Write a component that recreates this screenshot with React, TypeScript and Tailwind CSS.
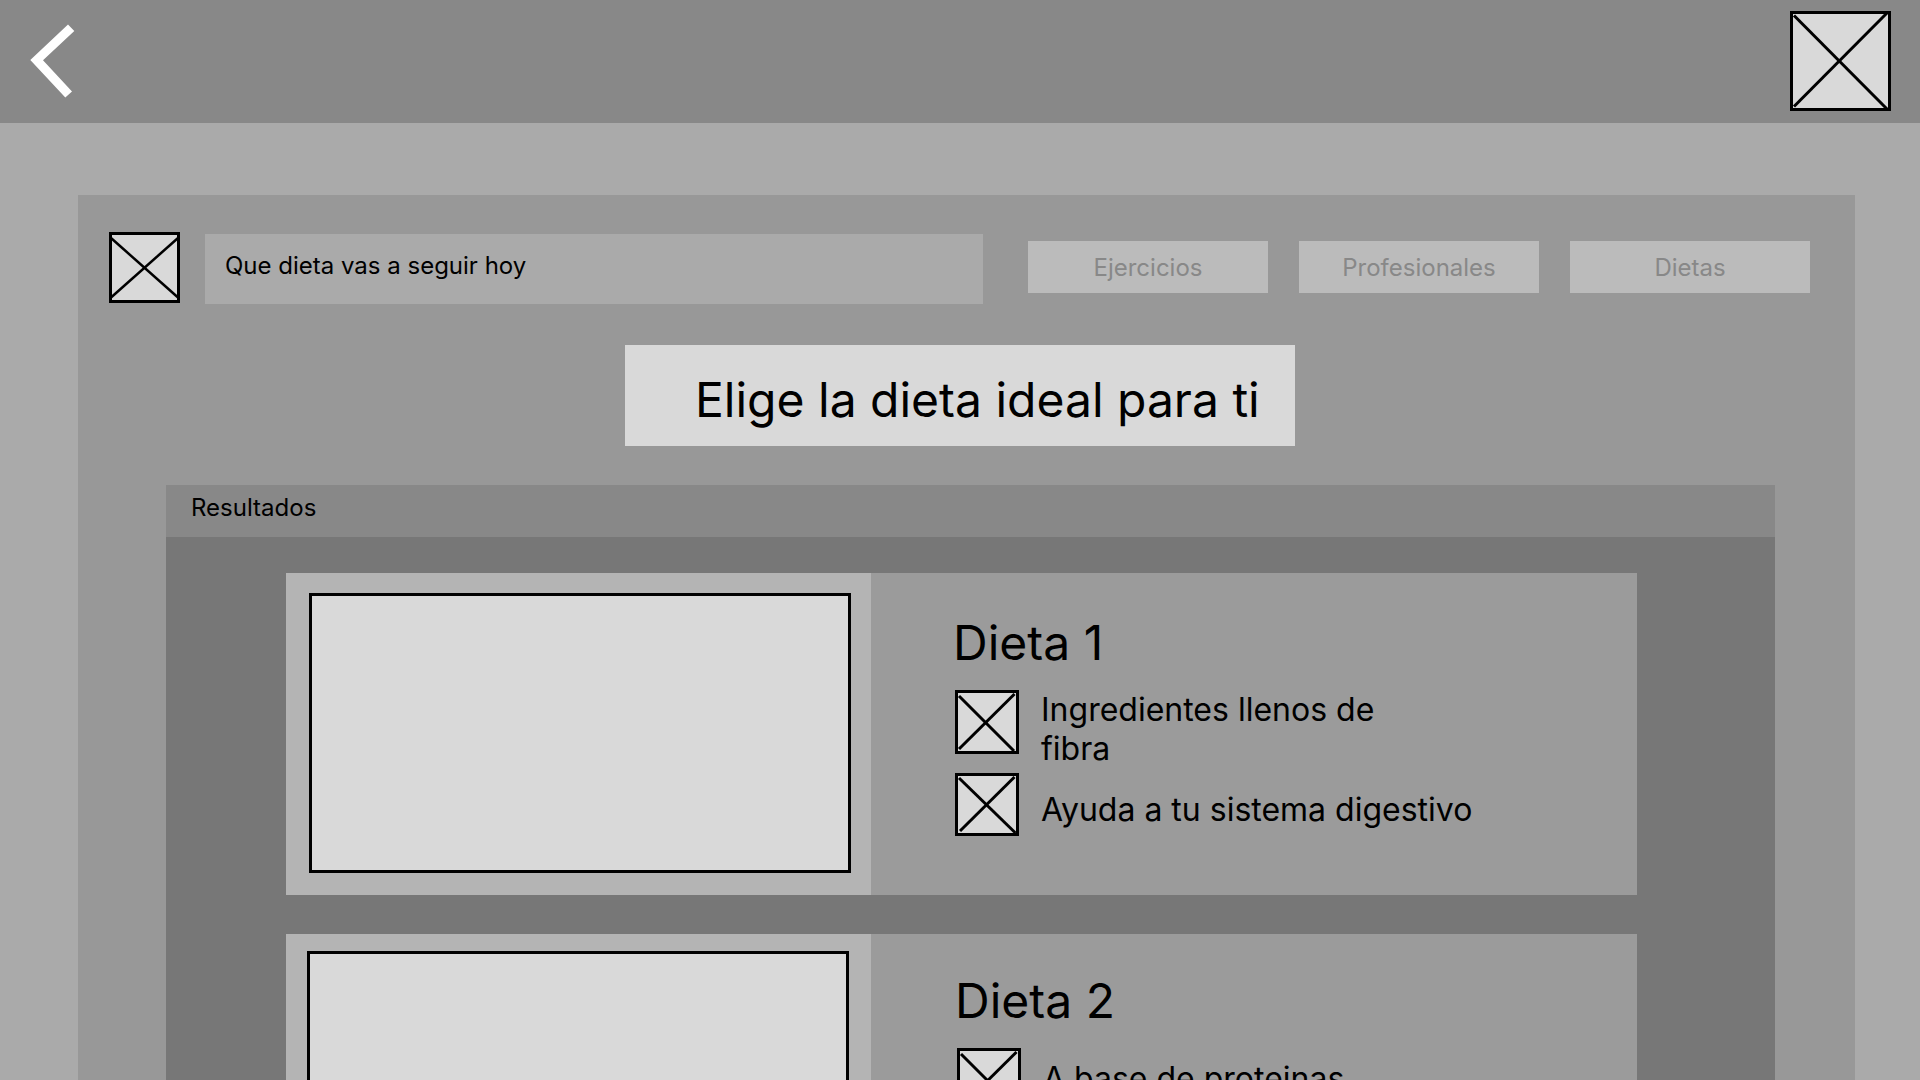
type Cross = [number, number, number, number][];

interface BoxProps {
  width: number;
  height: number;
  lines: Cross;
  stroke?: number;
}

function PlaceholderBox({ width, height, lines, stroke = 3 }: BoxProps) {
  return (
    <svg
      width={width}
      height={height}
      viewBox={`0 0 ${width} ${height}`}
      className="block shrink-0"
      aria-hidden="true"
    >
      <rect
        x={1.5}
        y={1.5}
        width={width - 3}
        height={height - 3}
        fill="#d9d9d9"
        stroke="#000"
        strokeWidth={3}
      />
      {lines.map(([x1, y1, x2, y2], i) => (
        <line
          key={i}
          x1={x1}
          y1={y1}
          x2={x2}
          y2={y2}
          stroke="#000"
          strokeWidth={stroke}
        />
      ))}
    </svg>
  );
}

const profileCross: Cross = [
  [4, 4.5, 97, 98],
  [4, 95.5, 97, 2],
];
const searchCross: Cross = [
  [2, 6, 69, 65.5],
  [2, 65.5, 69, 6],
];
const featureCross: Cross = [
  [4, 6, 59, 61],
  [4, 59, 59.5, 4],
];
const featureCrossWide: Cross = [
  [4, 5, 60.5, 60],
  [5, 58, 59.5, 4],
];

const diets = [
  {
    name: "Dieta 1",
    imagePadding: "pt-5 pr-5 pl-[23px]",
    bodyPadding: "pt-[41px] pl-[82px]",
    features: [
      { text: "Ingredientes llenos de\nfibra", pad: "", height: 64, cross: featureCross },
      { text: "Ayuda a tu sistema digestivo", pad: "pt-[17px]", height: 63, cross: featureCrossWide },
    ],
  },
  {
    name: "Dieta 2",
    imagePadding: "pt-[17px] pr-[22px] pl-[21px]",
    bodyPadding: "pt-[38px] pl-[84px]",
    features: [{ text: "A base de proteinas", pad: "pt-[11px]", height: 64, cross: featureCross }],
  },
];

const sections = ["Ejercicios", "Profesionales", "Dietas"];

export default function App() {
  return (
    <div className="h-screen overflow-y-auto bg-[#aaaaaa] font-['Inter',sans-serif] text-black [scrollbar-width:none]">
      <header className="flex h-[123px] items-center justify-between bg-[#888888] pr-[29px] pb-px pl-[30px]">
        <button type="button" aria-label="Volver">
          <svg width="46" height="76" viewBox="0 0 46 76" className="block">
            <path d="M38 1.5 44.3 8 13 37.2 42 68.5 35.3 74.5.3 37Z" fill="#fff" />
          </svg>
        </button>
        <button type="button" aria-label="Perfil">
          <PlaceholderBox width={101} height={100} lines={profileCross} />
        </button>
      </header>

      <main className="mt-[72px] mr-[65px] ml-[78px] bg-[#989898] pt-[37px] pb-10">
        <div className="flex items-start pr-[45px] pl-[31px]">
          <PlaceholderBox width={71} height={71} lines={searchCross} stroke={2.5} />
          <input
            type="text"
            aria-label="Buscar dieta"
            placeholder="Que dieta vas a seguir hoy"
            className="mt-0.5 ml-[25px] h-[70px] min-w-0 flex-1 bg-[#aaaaaa] px-5 pb-2 text-2xl outline-none placeholder:text-black placeholder:opacity-100"
          />
          <nav className="mt-[9px] ml-[45px] flex gap-[31px]">
            {sections.map((label) => (
              <button
                key={label}
                type="button"
                className="h-[52px] w-60 bg-[#bbbbbb] pt-0.5 text-2xl text-[#888888]"
              >
                {label}
              </button>
            ))}
          </nav>
        </div>

        <div className="mt-[41px] flex justify-center pr-[13px]">
          <h1 className="w-[670px] bg-[#d9d9d9] pt-[26px] pb-[17px] pl-[70px] text-5xl leading-[58px]">
            Elige la dieta ideal para ti
          </h1>
        </div>

        <section className="mt-[39px] mr-20 ml-[88px] bg-[#777777] pb-9">
          <h2 className="h-[52px] bg-[#888888] px-[25px] pt-2 text-2xl leading-[29px]">
            Resultados
          </h2>
          <div className="mt-9 mr-[138px] ml-[120px] flex flex-col gap-[39px]">
            {diets.map((diet) => (
              <article
                key={diet.name}
                className="grid min-h-[322px] grid-cols-[585fr_766fr] bg-[#9b9b9b]"
              >
                <div className={`bg-[#b4b4b4] ${diet.imagePadding}`}>
                  <div className="h-[280px] border-3 border-black bg-[#d9d9d9]" />
                </div>
                <div className={diet.bodyPadding}>
                  <h3 className="text-5xl leading-[58px]">{diet.name}</h3>
                  <ul className="mt-[18px] flex flex-col gap-[19px] pl-0.5">
                    {diet.features.map((feature) => (
                      <li key={feature.text} className="flex h-16 items-start gap-[22px]">
                        <PlaceholderBox width={64} height={feature.height} lines={feature.cross} />
                        <p
                          className={`text-[32px] leading-[39px] whitespace-pre-line ${feature.pad}`}
                        >
                          {feature.text}
                        </p>
                      </li>
                    ))}
                  </ul>
                </div>
              </article>
            ))}
          </div>
        </section>
      </main>
    </div>
  );
}
